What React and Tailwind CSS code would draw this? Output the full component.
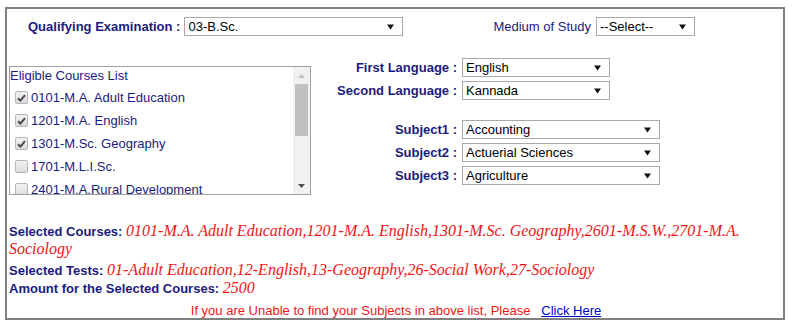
import React from 'react';

const navy = 'text-[#1b1b7c]';

const Arrow = () => (
  <svg width="7" height="6" viewBox="0 0 7 6" className="shrink-0">
    <path d="M0 0.5 L7 0.5 L3.5 5.5 Z" fill="#111" />
  </svg>
);

// old-school dropdown look
const FakeSelect = ({ value, className = '' }) => (
  <div
    className={`flex items-center justify-between h-[19px] border border-[#a9a9a9] bg-white pl-[3px] pr-[8px] text-[13px] text-black ${className}`}
  >
    <span className="leading-none">{value}</span>
    <Arrow />
  </div>
);

const Check = ({ checked }) => (
  <span className="flex items-center justify-center w-[13px] h-[13px] rounded-[2px] border border-[#b5b5b5] bg-gradient-to-b from-[#f2f2f2] to-[#dcdcdc] shrink-0">
    {checked && (
      <svg width="9" height="8" viewBox="0 0 9 8">
        <path d="M1 4.2 L3.4 6.6 L8 1.2" stroke="#4a4a4a" strokeWidth="2" fill="none" />
      </svg>
    )}
  </span>
);

const courses = [
  { label: '0101-M.A. Adult Education', checked: true },
  { label: '1201-M.A. English', checked: true },
  { label: '1301-M.Sc. Geography', checked: true },
  { label: '1701-M.L.I.Sc.', checked: false },
  { label: '2401-M.A.Rural Development', checked: false },
  { label: '2601-M.S.W.', checked: true },
];

const Row = ({ label, value, w }) => (
  <div className="flex items-center h-[19px]">
    <div className={`w-[146px] text-right font-bold text-[13px] ${navy}`}>{label}</div>
    <FakeSelect value={value} className={`ml-[5px] ${w}`} />
  </div>
);

const redText = "italic text-[16px] text-[#f01515] font-['Liberation_Serif','Times_New_Roman',serif]";

export default function App() {
  return (
    <div className="bg-white w-[797px] h-[329px] pt-[7px] pl-[5px] font-['Liberation_Sans',Arial,sans-serif]">
      <div className="w-[780px] h-[313px] border-2 border-[#808080] pt-[8px]">
        {/* top row */}
        <div className="flex items-center h-[19px]">
          <span className={`ml-[21px] font-bold text-[13px] ${navy}`}>Qualifying Examination :</span>
          <FakeSelect value="03-B.Sc." className="ml-[4px] w-[219px]" />
          <span className={`ml-[90px] text-[13px] ${navy}`}>Medium of Study</span>
          <FakeSelect value="--Select--" className="ml-[5px] w-[99px]" />
        </div>

        {/* middle */}
        <div className="flex items-start mt-[22px]">
          <div className="ml-[2px] mt-[8px] w-[302px] h-[129px] border border-[#a0a0a0] flex overflow-hidden">
            <div className={`flex-1 overflow-hidden text-[13px] ${navy}`}>
              <div className="leading-[15px] pt-[1px]">Eligible Courses List</div>
              <div className="flex flex-col gap-[8px] mt-[7px]">
                {courses.map((c) => (
                  <label key={c.label} className="flex items-center gap-[3px] pl-[5px] h-[15px] leading-[15px]">
                    <Check checked={c.checked} />
                    <span>{c.label}</span>
                  </label>
                ))}
              </div>
            </div>
            <div className="w-[17px] h-full bg-[#f1f1f1] flex flex-col items-center">
              <div className="h-[17px] flex items-center justify-center">
                <svg width="7" height="4" viewBox="0 0 7 4"><path d="M0 4 L3.5 0 L7 4 Z" fill="#c1c1c1" /></svg>
              </div>
              <div className="w-[13px] h-[52px] bg-[#c1c1c1]" />
              <div className="flex-1" />
              <div className="h-[17px] flex items-center justify-center">
                <svg width="7" height="4" viewBox="0 0 7 4"><path d="M0 0 L7 0 L3.5 4 Z" fill="#505050" /></svg>
              </div>
            </div>
          </div>

          <div className="flex flex-col">
            <div className="flex flex-col gap-[4px]">
              <Row label="First Language :" value="English" w="w-[148px]" />
              <Row label="Second Language :" value="Kannada" w="w-[148px]" />
            </div>
            <div className="flex flex-col gap-[4px] mt-[20px]">
              <Row label="Subject1 :" value="Accounting" w="w-[198px]" />
              <Row label="Subject2 :" value="Actuerial Sciences" w="w-[198px]" />
              <Row label="Subject3 :" value="Agriculture" w="w-[198px]" />
            </div>
          </div>
        </div>

        {/* summary */}
        <div className="ml-[2px] mt-[27px] text-[13px]">
          <div className="leading-[17px]">
            <span className={`font-bold ${navy}`}>Selected Courses: </span>
            <span className={redText}>
              0101-M.A. Adult Education,1201-M.A. English,1301-M.Sc. Geography,2601-M.S.W.,2701-M.A. Sociology
            </span>
          </div>
          <div className="leading-[17px] mt-[3px]">
            <span className={`font-bold ${navy}`}>Selected Tests: </span>
            <span className={redText}>
              01-Adult Education,12-English,13-Geography,26-Social Work,27-Sociology
            </span>
          </div>
          <div className="leading-[17px]">
            <span className={`font-bold ${navy}`}>Amount for the Selected Courses: </span>
            <span className={redText}>2500</span>
          </div>
          <div className="leading-[17px] mt-[5px] text-center text-[#f01515]">
            If you are Unable to find your Subjects in above list, Please&nbsp;&nbsp;&nbsp;
            <a href="#" className="text-[#0000cc] underline">Click Here</a>
          </div>
        </div>
      </div>
    </div>
  );
}
